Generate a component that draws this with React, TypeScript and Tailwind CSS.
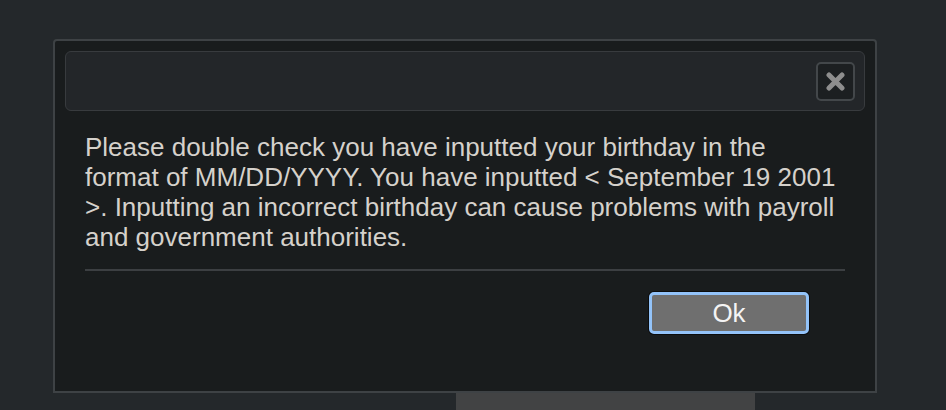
import React from "react";

const BODY =
  "Please double check you have inputted your birthday in the format of MM/DD/YYYY. You have inputted < September 19 2001 >. Inputting an incorrect birthday can cause problems with payroll and government authorities.";

function CloseGlyph() {
  return (
    <svg width="19" height="19" viewBox="0 0 19 19" fill="none">
      <path d="M3 3 L16 16 M16 3 L3 16" stroke="#8e8e8e" strokeWidth="5" strokeLinecap="round" />
    </svg>
  );
}

export default function App() {
  return (
    <div className="h-[410px] w-full overflow-hidden bg-[#24282b] pt-[39px] font-['Liberation_Sans',Arial,sans-serif]">
      <div className="ml-[53px] flex h-[354px] w-[824px] flex-col rounded-t-[4px] border-2 border-[#3e4245] bg-[#191c1d] p-[10px]">
        {/* title bar */}
        <div className="flex h-[60px] shrink-0 items-center justify-end rounded-[6px] border border-[#383b3e] bg-[#232629] pr-[9px]">
          <button className="flex h-[39px] w-[39px] items-center justify-center rounded-[5px] border-2 border-[#43474a] bg-[#1c1f21]">
            <CloseGlyph />
          </button>
        </div>

        <div className="flex flex-col px-[20px]">
          <p className="mt-[21px] text-[26px] leading-[30px] text-[#d5d1cb]">{BODY}</p>
          <div className="mt-[17px] h-[2px] w-full bg-[#3c3f42]" />
          <div className="mt-[21px] flex justify-end pr-[36px]">
            <button className="flex h-[42px] w-[160px] items-center justify-center rounded-[5px] border-[3px] border-[#93c3f9] bg-[#6f6f6f] text-[26px] leading-none text-[#f4f4f4] shadow-[0_0_0_1px_#0b0c0d]">
              Ok
            </button>
          </div>
        </div>
      </div>
      <div className="ml-[456px] h-[20px] w-[299px] bg-[#424344]" />
    </div>
  );
}
